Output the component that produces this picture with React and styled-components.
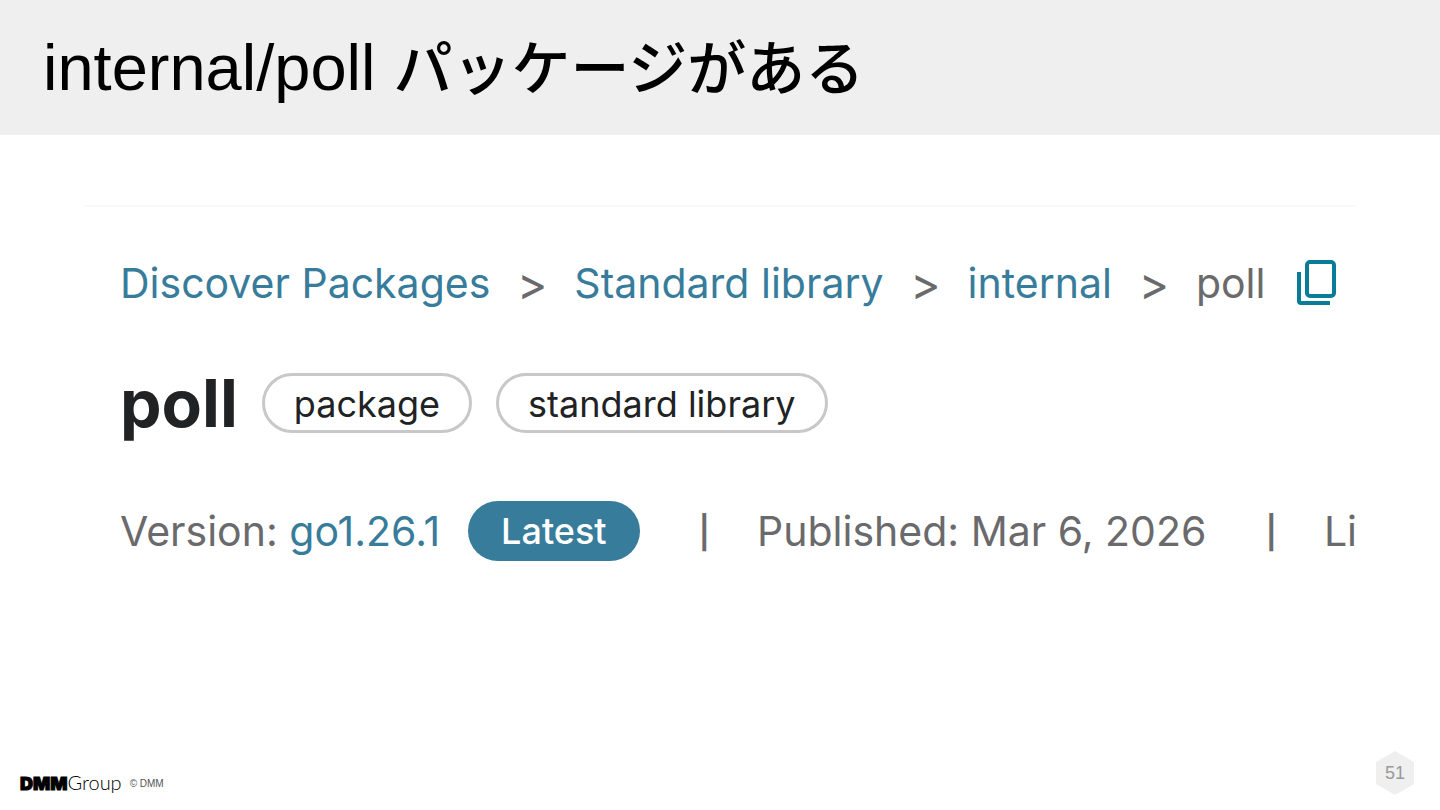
import React from "react"
import styled, { createGlobalStyle } from "styled-components"

const GlobalStyle = createGlobalStyle`
  * { box-sizing: border-box; }

  body {
    margin: 0;
    background: #fff;
  }
`;

const Slide = styled.div`
  display: flex;
  flex-direction: column;
  min-height: 100vh;
`;

const Header = styled.header`
  padding: 28px 43px 27px;
  background: #efefef;
`;

const Title = styled.h1`
  margin: 0;
  color: #000;
  font: 400 65px/80px "Liberation Sans", "Noto Sans CJK JP", sans-serif;
`;

const Kana = styled.span`
  display: inline-block;
  height: 80px;
  font: 500 59px/74px "Noto Sans CJK JP", sans-serif;
  vertical-align: top;
`;

const Main = styled.main`
  flex: 1;
  padding: 70px 84px 0;
`;

const Panel = styled.section`
  display: flex;
  flex-direction: column;
  overflow: hidden;

  padding: 46px 0 0 36px;
  border-top: 2px solid #f9f9f9;
  color: #6a6a6c;
  font: 400 41px/60px Inter, sans-serif;
  white-space: nowrap;
`;

const Breadcrumbs = styled.nav`
  display: flex;
  align-items: center;
`;

const Link = styled.a`
  color: #377c9b;
  text-decoration: none;
`;

const Arrow = styled.span`
  flex: none;
  width: 84px;
  font-size: 46px;
  text-align: center;
`;

const Bar = styled.span`
  padding: 4px 47px 0 59px;
  font-size: 32px;
  font-weight: 600;
  line-height: 56px;
`;

const CopyButton = styled.button`
  display: flex;

  margin-left: 32px;
  padding: 0;
  border: 0;
  background: none;
  color: #0a7c98;
  cursor: pointer;
`;

const Heading = styled.div`
  display: flex;
  align-items: center;
  gap: 24px;

  margin-top: 60px;
`;

const Name = styled.h2`
  margin: 0;
  color: #202224;
  font: 700 66px/60px Inter, sans-serif;
`;

const Chip = styled.span`
  height: 60px;
  padding: 0 29px;
  border: 3px solid #c8c8c8;
  border-radius: 30px;
  color: #202224;
  font-size: 36px;
  line-height: 56px;
`;

const Details = styled.div`
  display: flex;
  align-items: center;

  margin-top: 68px;
`;

const Version = styled.span`
  margin-right: 28px;
`;

const Latest = styled.span`
  padding: 0 33px;
  border-radius: 30px;
  background: #377c9b;
  color: #fff;
  font-size: 36px;
  font-weight: 500;
`;

const Footer = styled.footer`
  display: flex;
  align-items: center;
  justify-content: space-between;

  padding: 0 25px 14px 20px;
`;

const Brand = styled.div`
  display: flex;
  align-items: center;

  padding-top: 20px;
`;

const Logo = styled.span`
  color: #000;
  font: 300 20px/24px Lato, sans-serif;
`;

const LogoMark = styled.b`
  font: 900 18px/24px Inter, sans-serif;
  -webkit-text-stroke: 1px #000;
`;

const Copyright = styled.small`
  margin-left: 8px;
  padding-top: 2px;
  color: #555;
  font: 400 10px/24px "Liberation Sans", sans-serif;
`;

const CopyIcon = () => (
  <svg width="40" height="46" viewBox="0 0 40 46" fill="none" stroke="currentColor" strokeWidth="4" aria-hidden="true">
    <rect x="10" y="2" width="27" height="34" rx="3" />
    <path d="M2 12V41Q2 43 4 43H33" />
  </svg>
)

const PageNumber = ({ number }) => (
  <svg width="40" height="44" viewBox="0 0 40 44">
    <path d="M20 0L39 11V33L20 44L1 33V11Z" fill="#efefef" />
    <text x="20" y="28" textAnchor="middle" fontFamily="Liberation Sans, sans-serif" fontSize="18" fill="#999">{number}</text>
  </svg>
)

const crumbs = ["Discover Packages", "Standard library", "internal"]

const App = () => {
  return (<Slide>
    <GlobalStyle />
    <Header>
      <Title>internal/poll <Kana lang="ja">パッケージがある</Kana></Title>
    </Header>
    <Main>
      <Panel>
        <Breadcrumbs aria-label="Breadcrumb">
          { crumbs.map(label => <React.Fragment key={label} >
            <Link href="#">{label}</Link>
            <Arrow>&gt;</Arrow>
          </React.Fragment>) }
          <span>poll</span>
          <CopyButton type="button" aria-label="Copy path" ><CopyIcon /></CopyButton>
        </Breadcrumbs>
        <Heading>
          <Name>poll</Name>
          <Chip>package</Chip>
          <Chip>standard library</Chip>
        </Heading>
        <Details>
          <Version>Version: <Link href="#">go1.26.1</Link></Version>
          <Latest>Latest</Latest>
          <Bar>|</Bar>
          <span>Published: Mar 6, 2026</span>
          <Bar>|</Bar>
          <span>Li</span>
        </Details>
      </Panel>
    </Main>
    <Footer>
      <Brand>
        <Logo><LogoMark>DMM</LogoMark>Group</Logo>
        <Copyright>© DMM</Copyright>
      </Brand>
      <PageNumber number={51} />
    </Footer>
  </Slide>)
}

export default App
